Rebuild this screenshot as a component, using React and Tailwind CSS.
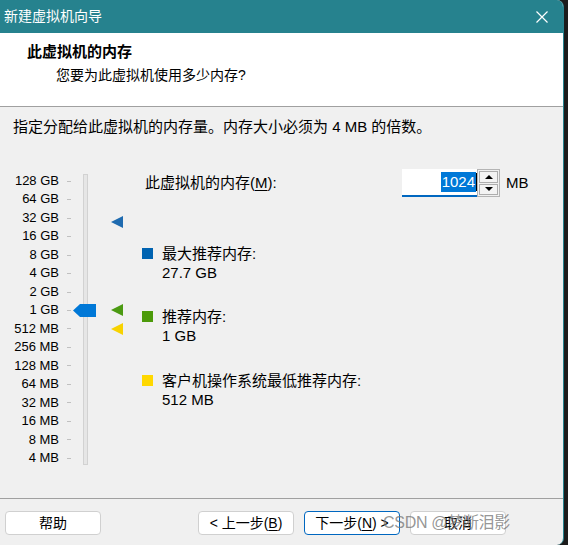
import React from 'react';

const labels = ['128 GB', '64 GB', '32 GB', '16 GB', '8 GB', '4 GB', '2 GB', '1 GB', '512 MB', '256 MB', '128 MB', '64 MB', '32 MB', '16 MB', '8 MB', '4 MB'];

function Arrow({ color, top }) {
  return (
    <svg className="absolute left-0" style={{ top }} width="12" height="12" viewBox="0 0 12 12">
      <polygon points="12,0 0,6 12,12" fill={color} />
    </svg>
  );
}

function Legend({ color, title, value, className }) {
  return (
    <div className={'flex ' + className}>
      <div className={'w-[11px] h-[11px] mt-[4px] ' + color} />
      <div className="ml-[9px] text-[15px] leading-[19px]">
        <div>{title}</div>
        <div>{value}</div>
      </div>
    </div>
  );
}

function Btn({ children, primary }) {
  return (
    <button
      className={
        'w-[96px] h-[24px] rounded-[4px] bg-white text-[14px] leading-none flex items-center justify-center border ' +
        (primary ? 'border-[#0067c0]' : 'border-[#d0d0d0]')
      }
    >
      {children}
    </button>
  );
}

export default function App() {
  return (
    <div className="w-[568px] h-[545px] bg-[#1c1c1c] overflow-hidden text-black font-['Liberation_Sans','Noto_Sans_CJK_SC',sans-serif]">
      <div className="w-[564px] h-[545px] bg-[#f0f0f0] flex flex-col rounded-tr-[7px] rounded-br-[7px] border-r border-[#26828e] overflow-hidden">
        {/* title bar */}
        <div className="h-[33px] shrink-0 bg-[#26828e] flex items-center justify-between pl-[4px] pr-[15px]">
          <span className="text-white text-[14px]">新建虚拟机向导</span>
          <svg width="12" height="12" viewBox="0 0 12 12">
            <path d="M0.5 0.5 L11.5 11.5 M11.5 0.5 L0.5 11.5" stroke="white" strokeWidth="1.2" />
          </svg>
        </div>

        {/* header */}
        <div className="h-[74px] shrink-0 bg-white border-b border-[#a0a0a0]">
          <div className="pl-[27px] pt-[9px] text-[15px] font-bold leading-[20px]">此虚拟机的内存</div>
          <div className="pl-[56px] pt-[3px] text-[14px] leading-[20px]">您要为此虚拟机使用多少内存?</div>
        </div>

        {/* body */}
        <div className="flex-1 flex flex-col">
          <div className="pl-[13px] pt-[10px] text-[15px] leading-[20px]">指定分配给此虚拟机的内存量。内存大小必须为 4 MB 的倍数。</div>

          <div className="flex mt-[29px]">
            {/* scale */}
            <div className="relative flex pt-[6px]">
              <div className="w-[59px] text-right text-[13px]">
                {labels.map((l) => (
                  <div key={l} className="h-[18.47px] leading-[18.47px]">{l}</div>
                ))}
              </div>
              <div className="ml-[8px] w-[4px]">
                {labels.map((l) => (
                  <div key={l} className="h-[18.47px] flex items-center">
                    <div className="w-[4px] h-[1px] bg-[#c0c0c0]" />
                  </div>
                ))}
              </div>
              <div className="ml-[12px] mt-[2px] w-[5px] h-[291px] bg-[#e6e6e6] border border-[#d2d2d2]" />
              <svg className="absolute left-[73px] top-[138px]" width="23" height="13" viewBox="0 0 23 13">
                <polygon points="7,0 23,0 23,13 7,13 0,6.5" fill="#0078d7" />
              </svg>
            </div>

            {/* markers */}
            <div className="relative ml-[23px] w-[12px]">
              <Arrow color="#1f6bb0" top={50} />
              <Arrow color="#4b9a12" top={138} />
              <Arrow color="#f7d200" top={157} />
            </div>

            {/* right panel */}
            <div className="ml-[19px] flex flex-col">
              <div className="flex items-center mt-[3px] h-[28px]">
                <div className="w-[260px] pl-[3px] text-[15px]">
                  此虚拟机的内存(<span className="underline underline-offset-2">M</span>):
                </div>
                <div className="w-[75px] h-[28px] bg-white border-b-2 border-[#0067c0] flex items-center justify-end">
                  <span className="bg-[#0078d7] text-white text-[15px] leading-[20px] px-[1px]">1024</span>
                  <span className="w-[1px] h-[18px] bg-black" />
                </div>
                <div className="w-[23px] h-[28px] border border-[#b4b4b4] flex flex-col p-[1px] gap-[1px] bg-[#f0f0f0]">
                  <div className="flex-1 border border-[#adadad] bg-[#f3f3f3] flex items-center justify-center">
                    <svg width="8" height="4" viewBox="0 0 8 4"><polygon points="0,4 4,0 8,4" fill="black" /></svg>
                  </div>
                  <div className="flex-1 border border-[#adadad] bg-[#f3f3f3] flex items-center justify-center">
                    <svg width="8" height="4" viewBox="0 0 8 4"><polygon points="0,0 8,0 4,4" fill="black" /></svg>
                  </div>
                </div>
                <span className="ml-[6px] text-[15px]">MB</span>
              </div>

              <Legend className="mt-[47px]" color="bg-[#0063b1]" title="最大推荐内存:" value="27.7 GB" />
              <Legend className="mt-[25px]" color="bg-[#4c9a0a]" title="推荐内存:" value="1 GB" />
              <Legend className="mt-[26px]" color="bg-[#ffd800]" title="客户机操作系统最低推荐内存:" value="512 MB" />
            </div>
          </div>
        </div>

        {/* footer */}
        <div className="h-[47px] shrink-0 border-t border-[#a0a0a0] relative">
          <div className="flex pt-[12px] pl-[5px]">
            <Btn>帮助</Btn>
            <div className="ml-[97px] flex gap-[10px]">
              <Btn>&lt; 上一步(<span className="underline underline-offset-2">B</span>)</Btn>
              <Btn primary>下一步(<span className="underline underline-offset-2">N</span>) &gt;</Btn>
              <Btn>取消</Btn>
            </div>
          </div>
          <div className="absolute left-[383px] top-[12px] text-[16px] tracking-[-0.3px] text-[#7a7a7a]/80 leading-[24px] whitespace-nowrap">CSDN @梦断泪影</div>
        </div>
      </div>
    </div>
  );
}
